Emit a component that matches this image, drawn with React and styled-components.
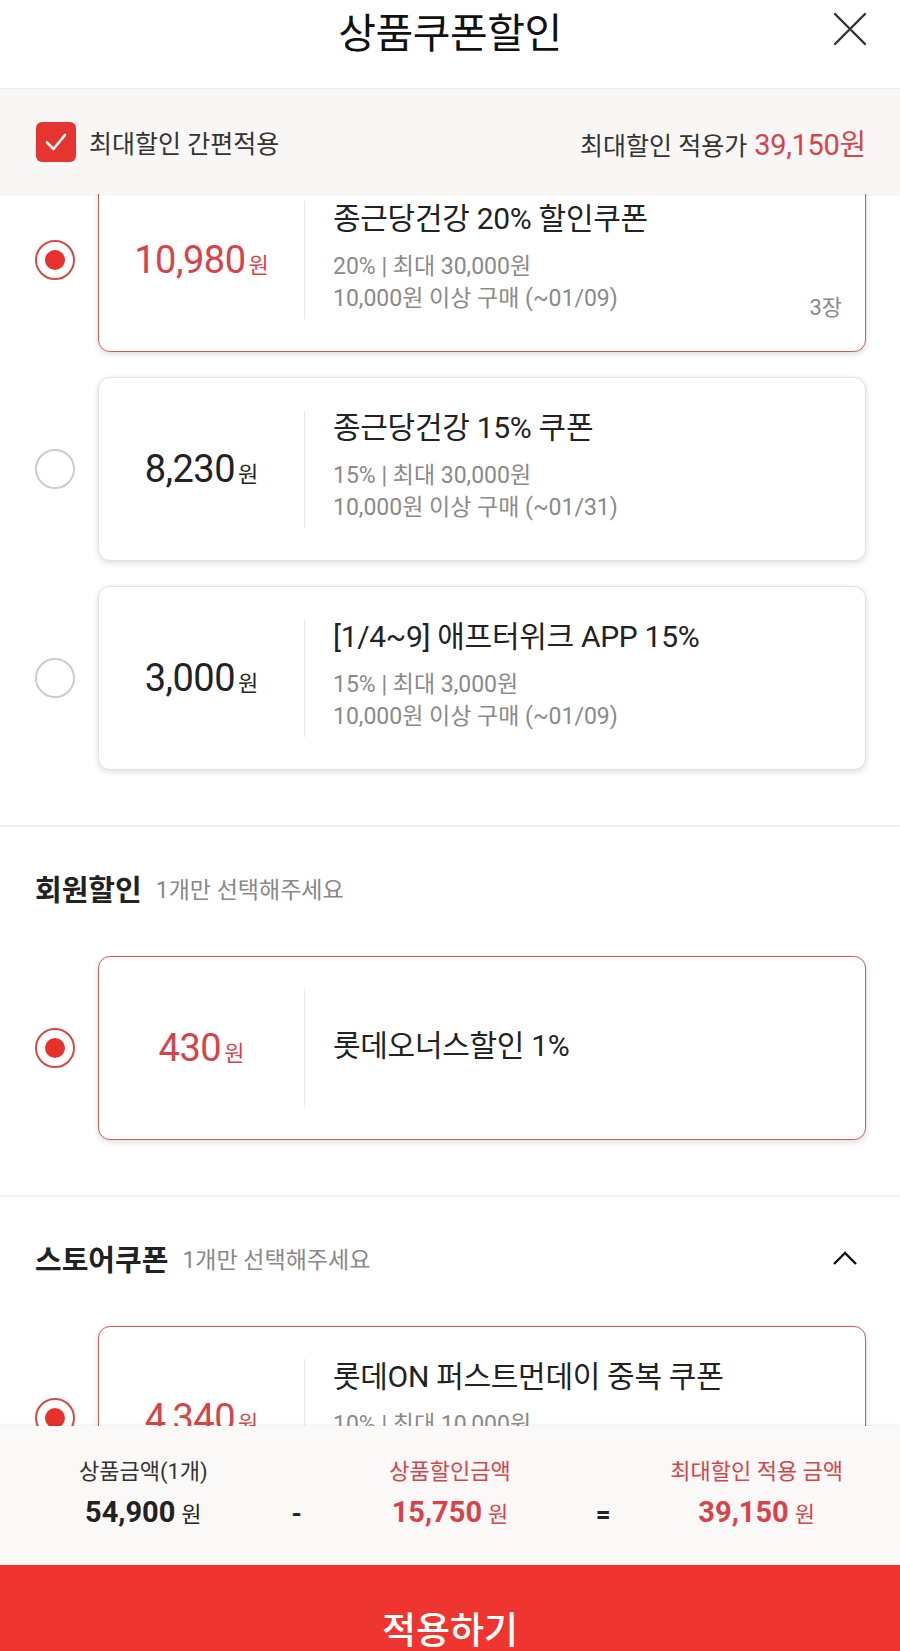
import React from "react";
import styled, { createGlobalStyle } from "styled-components";

const GlobalStyle = createGlobalStyle`
  html, body {
    margin: 0;
    padding: 0;
    background: #fff;
  }
  body {
    font-family: Roboto, "Noto Sans CJK KR", sans-serif;
    color: #222;
  }
  * {
    box-sizing: border-box;
  }
`;

const RED = "#d8434b";
const BRIGHT_RED = "#ee3530";

const Page = styled.div`
  width: 900px;
  height: 1651px;
  overflow: hidden;
  display: flex;
  flex-direction: column;
  background: #fff;
`;

const Header = styled.div`
  flex: 0 0 87px;
  position: relative;
  display: flex;
  align-items: center;
  justify-content: center;
  border-bottom: 1px solid #ebebeb;
`;

const Title = styled.h1`
  margin: 0 0 28px;
  font-size: 41px;
  font-weight: 400;
  color: #111;
  letter-spacing: -0.5px;
`;

const CloseButton = styled.button`
  position: absolute;
  right: 32px;
  top: 11px;
  width: 36px;
  height: 36px;
  padding: 0;
  border: 0;
  background: none;
`;

const MaxBar = styled.div`
  flex: 0 0 105px;
  display: flex;
  align-items: center;
  justify-content: space-between;
  padding: 0 34px 0 36px;
  background: #f8f7f5;
  box-shadow: 0 1px 2px rgba(0, 0, 0, 0.06);
  position: relative;
  z-index: 1;
`;

const CheckLabel = styled.label`
  display: flex;
  align-items: center;
  gap: 13px;
  font-size: 25px;
  color: #333;
`;

const CheckBox = styled.span`
  width: 40px;
  height: 40px;
  border-radius: 6px;
  background: #e53530;
  display: flex;
  align-items: center;
  justify-content: center;
`;

const MaxPrice = styled.div`
  font-size: 25px;
  color: #333;
  display: flex;
  align-items: baseline;
  gap: 7px;
`;

const RedAmount = styled.span`
  color: ${RED};
  font-size: 29px;
  letter-spacing: -0.3px;
`;

const ScrollArea = styled.div`
  flex: 0 0 1232px;
  overflow: hidden;
`;

const ScrollContent = styled.div`
  margin-top: -26px;
`;

const Section = styled.section`
  padding-bottom: 55px;
  border-bottom: ${(p) => (p.$divider ? "2px solid #f0f0f0" : "none")};
`;

const SectionHead = styled.div`
  display: flex;
  align-items: center;
  height: 30px;
  margin: 46px 0 53px;
  padding: 0 42px 0 35px;
`;

const SectionTitle = styled.h2`
  margin: 0;
  font-size: 29px;
  font-weight: 700;
  color: #222;
`;

const SectionHint = styled.span`
  margin-left: 14px;
  font-size: 23px;
  color: #888;
  flex: 1;
`;

const CardList = styled.div`
  display: flex;
  flex-direction: column;
  gap: 25px;
`;

const Row = styled.div`
  display: flex;
  align-items: center;
  gap: 23px;
  padding: 0 34px 0 35px;
`;

const Radio = styled.span`
  flex: 0 0 40px;
  height: 40px;
  border-radius: 50%;
  border: 2px solid ${(p) => (p.$on ? "#d24a4a" : "#cccccc")};
  display: flex;
  align-items: center;
  justify-content: center;
  &::after {
    content: "";
    display: ${(p) => (p.$on ? "block" : "none")};
    width: 20px;
    height: 20px;
    border-radius: 50%;
    background: #e8302c;
  }
`;

const Card = styled.div`
  position: relative;
  flex: 1;
  height: 184px;
  display: flex;
  align-items: center;
  background: #fff;
  border-radius: 12px;
  border: ${(p) => (p.$on ? "1.5px solid #d25a5f" : "1px solid #e2e2e2")};
  box-shadow: 0 2px 6px rgba(0, 0, 0, 0.14);
`;

const PriceCol = styled.div`
  flex: 0 0 205px;
  text-align: center;
  color: ${(p) => (p.$on ? RED : "#222")};
  white-space: nowrap;
`;

const PriceNum = styled.span`
  font-size: 38px;
  letter-spacing: -0.5px;
`;

const Won = styled.span`
  font-size: 22px;
  margin-left: 3px;
`;

const Divider = styled.div`
  flex: 0 0 1px;
  height: 118px;
  background: #e8e8e8;
`;

const Info = styled.div`
  flex: 1;
  padding-left: 28px;
  margin-top: -4px;
`;

const CouponName = styled.div`
  font-size: 30px;
  line-height: 36px;
  color: #222;
  letter-spacing: -0.3px;
  margin-bottom: ${(p) => (p.$single ? "0" : "14px")};
`;

const Detail = styled.div`
  font-size: 23px;
  line-height: 32px;
  color: #8a8a8a;
`;

const Count = styled.span`
  position: absolute;
  right: 23px;
  bottom: 30px;
  font-size: 22px;
  color: #8a8a8a;
`;

const Footer = styled.div`
  flex: 0 0 139px;
  display: grid;
  grid-template-columns: 1fr 20px 1fr 20px 1fr;
  align-items: center;
  padding: 0 0 2px;
  background: #faf9f7;
  box-shadow: 0 -1px 3px rgba(0, 0, 0, 0.08);
  position: relative;
  z-index: 1;
`;

const SumCol = styled.div`
  text-align: center;
  color: ${(p) => (p.$red ? RED : "#333")};
`;

const SumLabel = styled.div`
  font-size: 22px;
  line-height: 30px;
  margin-bottom: 8px;
`;

const SumValue = styled.div`
  font-size: 29px;
  font-weight: 700;
  line-height: 34px;
  color: ${(p) => (p.$red ? RED : "#222")};
  span {
    font-size: 22px;
    font-weight: 400;
    margin-left: 6px;
  }
`;

const Operator = styled.div`
  text-align: center;
  font-size: 26px;
  font-weight: 700;
  color: #222;
  padding-top: 38px;
`;

const ApplyButton = styled.button`
  flex: 0 0 120px;
  width: 100%;
  border: 0;
  background: ${BRIGHT_RED};
  color: #fff;
  font-family: Roboto, "Noto Sans CJK KR", sans-serif;
  font-size: 37px;
  font-weight: 500;
  padding: 0;
  display: flex;
  justify-content: center;
  padding-top: 36px;
`;

const productCoupons = [
  {
    price: "10,980",
    name: "종근당건강 20% 할인쿠폰",
    details: ["20% | 최대 30,000원", "10,000원 이상 구매 (~01/09)"],
    count: "3장",
    on: true,
  },
  {
    price: "8,230",
    name: "종근당건강 15% 쿠폰",
    details: ["15% | 최대 30,000원", "10,000원 이상 구매 (~01/31)"],
  },
  {
    price: "3,000",
    name: "[1/4~9] 애프터위크 APP 15%",
    details: ["15% | 최대 3,000원", "10,000원 이상 구매 (~01/09)"],
  },
];

const CouponRow = ({ coupon }) => (
  <Row>
    <Radio $on={coupon.on} />
    <Card $on={coupon.on}>
      <PriceCol $on={coupon.on}>
        <PriceNum>{coupon.price}</PriceNum>
        <Won>원</Won>
      </PriceCol>
      <Divider />
      <Info>
        <CouponName $single={!coupon.details}>{coupon.name}</CouponName>
        {coupon.details &&
          coupon.details.map((d) => <Detail key={d}>{d}</Detail>)}
      </Info>
      {coupon.count && <Count>{coupon.count}</Count>}
    </Card>
  </Row>
);

export default function App() {
  return (
    <Page>
      <GlobalStyle />
      <Header>
        <Title>상품쿠폰할인</Title>
        <CloseButton aria-label="닫기">
          <svg width="36" height="36" viewBox="0 0 36 36">
            <path
              d="M3 3 L33 33 M33 3 L3 33"
              stroke="#333"
              strokeWidth="2.4"
              strokeLinecap="round"
            />
          </svg>
        </CloseButton>
      </Header>

      <MaxBar>
        <CheckLabel>
          <CheckBox>
            <svg width="26" height="26" viewBox="0 0 26 26">
              <path
                d="M4 13.5 L10.5 20 L22 6"
                fill="none"
                stroke="#fff"
                strokeWidth="2.6"
                strokeLinecap="round"
                strokeLinejoin="round"
              />
            </svg>
          </CheckBox>
          최대할인 간편적용
        </CheckLabel>
        <MaxPrice>
          최대할인 적용가
          <RedAmount>39,150원</RedAmount>
        </MaxPrice>
      </MaxBar>

      <ScrollArea>
        <ScrollContent>
          <Section $divider>
            <CardList>
              {productCoupons.map((c) => (
                <CouponRow key={c.name} coupon={c} />
              ))}
            </CardList>
          </Section>

          <Section $divider>
            <SectionHead>
              <SectionTitle>회원할인</SectionTitle>
              <SectionHint>1개만 선택해주세요</SectionHint>
            </SectionHead>
            <CouponRow
              coupon={{ price: "430", name: "롯데오너스할인 1%", on: true }}
            />
          </Section>

          <Section>
            <SectionHead>
              <SectionTitle>스토어쿠폰</SectionTitle>
              <SectionHint>1개만 선택해주세요</SectionHint>
              <svg width="26" height="16" viewBox="0 0 26 16">
                <path
                  d="M2 14 L13 3 L24 14"
                  fill="none"
                  stroke="#111"
                  strokeWidth="2.4"
                />
              </svg>
            </SectionHead>
            <CouponRow
              coupon={{
                price: "4,340",
                name: "롯데ON 퍼스트먼데이 중복 쿠폰",
                details: ["10% | 최대 10,000원", "10,000원 이상 구매"],
                on: true,
              }}
            />
          </Section>
        </ScrollContent>
      </ScrollArea>

      <Footer>
        <SumCol>
          <SumLabel>상품금액(1개)</SumLabel>
          <SumValue>
            54,900<span>원</span>
          </SumValue>
        </SumCol>
        <Operator>-</Operator>
        <SumCol $red>
          <SumLabel>상품할인금액</SumLabel>
          <SumValue $red>
            15,750<span>원</span>
          </SumValue>
        </SumCol>
        <Operator>=</Operator>
        <SumCol $red>
          <SumLabel>최대할인 적용 금액</SumLabel>
          <SumValue $red>
            39,150<span>원</span>
          </SumValue>
        </SumCol>
      </Footer>

      <ApplyButton>적용하기</ApplyButton>
    </Page>
  );
}
